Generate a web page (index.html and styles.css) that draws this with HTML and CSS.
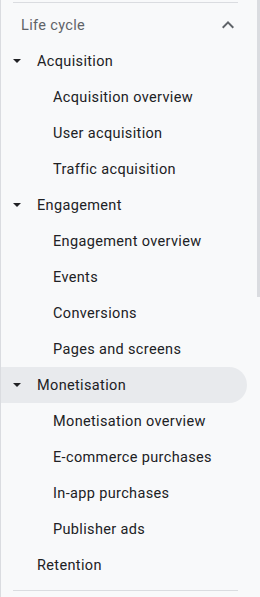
FILE: index.html
```html
<!DOCTYPE html>
<html lang="en">
<head>
  <meta charset="UTF-8" />
  <meta name="viewport" content="width=device-width, initial-scale=1" />
  <title>Reports</title>
  <link rel="stylesheet" href="styles.css">
</head>
<body>
  <nav class="sidebar">
    <div class="divider"></div>
    <div class="section-head">
      <span>Life cycle</span>
      <svg class="chevron" width="12" height="8" viewBox="0 0 12 8"><path d="M1.4 7.4 6 2.8l4.6 4.6L12 6 6 0 0 6z" fill="#5f6368"/></svg>
    </div>
    <ul class="menu">
      <li class="item top"><span class="caret"></span>Acquisition</li>
      <li class="item sub">Acquisition overview</li>
      <li class="item sub">User acquisition</li>
      <li class="item sub">Traffic acquisition</li>
      <li class="item top"><span class="caret"></span>Engagement</li>
      <li class="item sub">Engagement overview</li>
      <li class="item sub">Events</li>
      <li class="item sub">Conversions</li>
      <li class="item sub">Pages and screens</li>
      <li class="item top active"><span class="caret"></span>Monetisation</li>
      <li class="item sub">Monetisation overview</li>
      <li class="item sub">E-commerce purchases</li>
      <li class="item sub">In-app purchases</li>
      <li class="item sub">Publisher ads</li>
      <li class="item top">Retention</li>
    </ul>
    <div class="divider"></div>
    <div class="scroll"></div>
  </nav>
</body>
</html>
```

FILE: styles.css
```css
body {
  margin: 0;
  font-family: Roboto, "Noto Sans", Arial, sans-serif;
  background-color: #f8f9fa;
}
.sidebar {
  position: relative;
  height: 597px;
  border-left: 1px solid #dadce0;
  box-sizing: border-box;
  padding-top: 2px;
  overflow: hidden;
}
.divider {
  height: 1px;
  background-color: #dadce0;
  margin: 0 22px 0 12px;
}
.section-head {
  display: flex;
  align-items: center;
  justify-content: space-between;
  height: 36px;
  margin-top: 4px;
  padding: 0 26px 0 20px;
  font-size: 14.5px;
  letter-spacing: 0.35px;
  color: #5f6368;
}
.chevron {
  display: block;
}
.menu {
  list-style: none;
  margin: 0;
  padding: 0;
}
.item {
  position: relative;
  height: 36px;
  display: flex;
  align-items: center;
  font-size: 14.5px;
  letter-spacing: 0.35px;
  color: #202124;
  margin-right: 13px;
  border-radius: 0 18px 18px 0;
}
.top {
  padding-left: 36px;
}
.sub {
  padding-left: 52px;
}
.active {
  background-color: #e8eaed;
}
.caret {
  position: absolute;
  left: 12px;
  top: 16px;
  width: 0;
  height: 0;
  border-left: 4px solid transparent;
  border-right: 4px solid transparent;
  border-top: 4px solid #202124;
}
.menu + .divider {
  margin-top: 7px;
}
.scroll {
  position: absolute;
  right: 0;
  top: 0;
  width: 3px;
  height: 297px;
  background-color: #dadce0;
}
```
